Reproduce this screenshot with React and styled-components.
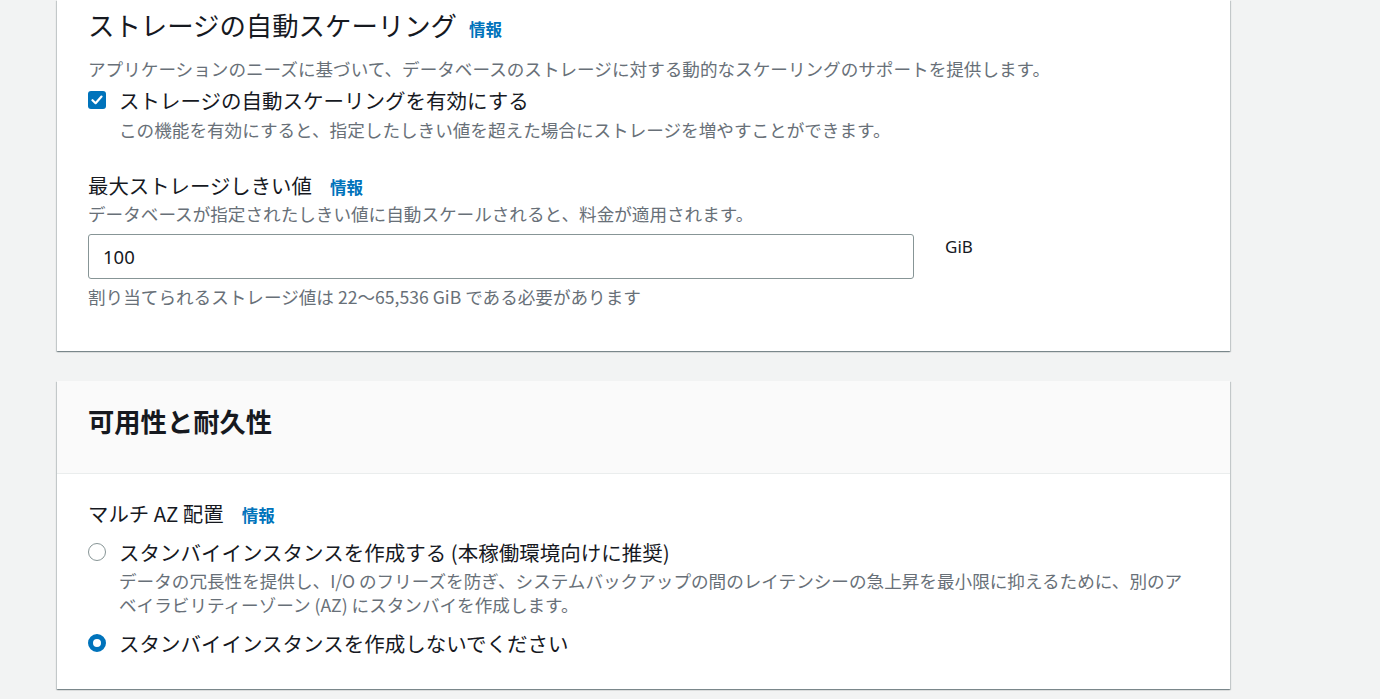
import React from "react";
import styled, { createGlobalStyle } from "styled-components";

const GlobalStyle = createGlobalStyle`
  html, body {
    margin: 0;
    padding: 0;
    background: #f2f3f3;
  }
  body {
    font-family: "Noto Sans CJK JP", "Noto Sans", sans-serif;
    color: #16191f;
  }
`;

const Page = styled.div`
  width: 1380px;
  height: 699px;
  overflow: hidden;
  padding-left: 57px;
  box-sizing: border-box;
  display: flex;
  flex-direction: column;
  gap: 30px;
`;

const Card = styled.section`
  width: 1173px;
  background: #fff;
  box-sizing: border-box;
  box-shadow: 0 1px 1px 0 rgba(0, 28, 36, 0.3),
    1px 1px 1px 0 rgba(0, 28, 36, 0.15), -1px 1px 1px 0 rgba(0, 28, 36, 0.15);
`;

const CardBody = styled.div`
  padding: ${(p) => p.$pad || "8px 31px 43px"};
  display: flex;
  flex-direction: column;
`;

const CardHeader = styled.div`
  background: #fafafa;
  border-bottom: 1px solid #eaeded;
  padding: 23px 31px 35px;
`;

const HeaderTitle = styled.h2`
  margin: 0;
  font-size: 26.3px;
  line-height: 34px;
  font-weight: 700;
`;

const Title = styled.h2`
  margin: 0;
  font-size: 26.4px;
  line-height: 34px;
  font-weight: 400;
  display: flex;
  align-items: baseline;
  gap: 12px;
`;

const Info = styled.a`
  color: #0073bb;
  font-size: 16.5px;
  font-weight: 700;
  text-decoration: none;
  cursor: pointer;
`;

const Desc = styled.p`
  margin: ${(p) => p.$mt || 0}px 0 0 ${(p) => p.$ml || 0}px;
  font-size: 17.6px;
  line-height: ${(p) => p.$lh || 22}px;
  color: #687078;
`;

const OptionRow = styled.label`
  display: flex;
  align-items: center;
  gap: 13px;
  margin-top: ${(p) => p.$mt || 0}px;
  font-size: 20.5px;
  line-height: 26px;
  cursor: pointer;
`;

const Checkbox = styled.span`
  width: 18px;
  height: 18px;
  border-radius: 3px;
  background: #0073bb;
  display: inline-flex;
  align-items: center;
  justify-content: center;
  flex-shrink: 0;
`;

const Radio = styled.span`
  width: 18px;
  height: 18px;
  border-radius: 50%;
  box-sizing: border-box;
  flex-shrink: 0;
  background: #fff;
  border: ${(p) => (p.$checked ? "5px solid #0073bb" : "1.5px solid #879596")};
`;

const FieldLabel = styled.div`
  margin-top: ${(p) => p.$mt || 0}px;
  font-size: 20.4px;
  line-height: 26px;
  display: flex;
  align-items: baseline;
  gap: 18px;
`;

const InputRow = styled.div`
  margin-top: 9px;
  display: flex;
  align-items: flex-start;
  gap: 31px;
`;

const Input = styled.input`
  width: 826px;
  height: 45px;
  box-sizing: border-box;
  border: 1.5px solid #879596;
  border-radius: 3px;
  padding: 0 14px;
  font-family: "Noto Sans", "Noto Sans CJK JP", sans-serif;
  font-size: 18.5px;
  color: #16191f;
  outline: none;
`;

const Unit = styled.span`
  font-family: "Noto Sans", sans-serif;
  font-size: 17px;
  line-height: 26px;
`;

export default function App() {
  return (
    <>
      <GlobalStyle />
      <Page>
        <Card>
          <CardBody>
            <Title>
              ストレージの自動スケーリング <Info>情報</Info>
            </Title>
            <Desc $mt={11} $lh={24}>
              アプリケーションのニーズに基づいて、データベースのストレージに対する動的なスケーリングのサポートを提供します。
            </Desc>
            <OptionRow $mt={6}>
              <Checkbox>
                <svg width="12" height="10" viewBox="0 0 12 10">
                  <path
                    d="M1.5 5.2 L4.6 8.2 L10.5 1.6"
                    fill="none"
                    stroke="#fff"
                    strokeWidth="2.2"
                    strokeLinecap="round"
                    strokeLinejoin="round"
                  />
                </svg>
              </Checkbox>
              ストレージの自動スケーリングを有効にする
            </OptionRow>
            <Desc $mt={6} $ml={31}>
              この機能を有効にすると、指定したしきい値を超えた場合にストレージを増やすことができます。
            </Desc>
            <FieldLabel $mt={31}>
              最大ストレージしきい値 <Info>情報</Info>
            </FieldLabel>
            <Desc $mt={3}>
              データベースが指定されたしきい値に自動スケールされると、料金が適用されます。
            </Desc>
            <InputRow>
              <Input defaultValue="100" />
              <Unit>GiB</Unit>
            </InputRow>
            <Desc $mt={7}>
              割り当てられるストレージ値は 22～65,536 GiB である必要があります
            </Desc>
          </CardBody>
        </Card>

        <Card>
          <CardHeader>
            <HeaderTitle>可用性と耐久性</HeaderTitle>
          </CardHeader>
          <CardBody $pad="26px 31px 33px">
            <FieldLabel>
              マルチ AZ 配置 <Info>情報</Info>
            </FieldLabel>
            <OptionRow $mt={11}>
              <Radio />
              スタンバイインスタンスを作成する (本稼働環境向けに推奨)
            </OptionRow>
            <Desc $mt={4} $ml={31} $lh={24}>
              データの冗長性を提供し、I/O のフリーズを防ぎ、システムバックアップの間のレイテンシーの急上昇を最小限に抑えるために、別のア
              <br />
              ベイラビリティーゾーン (AZ) にスタンバイを作成します。
            </Desc>
            <OptionRow $mt={13}>
              <Radio $checked />
              スタンバイインスタンスを作成しないでください
            </OptionRow>
          </CardBody>
        </Card>
      </Page>
    </>
  );
}
